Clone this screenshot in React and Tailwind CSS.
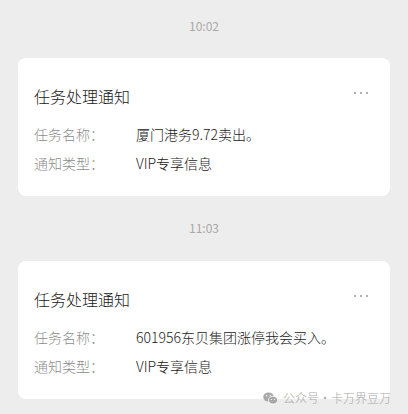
import React from 'react';

const font = { fontFamily: '"Noto Sans CJK SC", "Noto Sans", sans-serif' };

function Card({ name, type }) {
  return (
    <div className="mx-[18px] rounded-lg bg-white pl-4 pr-[22px] pt-[27px] pb-[23px]">
      <div className="flex items-center justify-between h-[22px]">
        <span className="text-[16px] leading-[22px] font-light text-[#191919]">任务处理通知</span>
        <span className="flex gap-[4px] -mt-[6px]">
          <i className="block w-[2px] h-[2px] bg-[#b0b0b0]" />
          <i className="block w-[2px] h-[2px] bg-[#b0b0b0]" />
          <i className="block w-[2px] h-[2px] bg-[#b0b0b0]" />
        </span>
      </div>
      <div className="mt-[17px] flex flex-col gap-[9px] text-[14px] leading-[20px] font-light">
        <div className="flex">
          <span className="w-[102px] text-[#8c8c8c]">任务名称：</span>
          <span className="text-[#1a1a1a]">{name}</span>
        </div>
        <div className="flex">
          <span className="w-[102px] text-[#8c8c8c]">通知类型：</span>
          <span className="text-[#1a1a1a]">{type}</span>
        </div>
      </div>
    </div>
  );
}

function Time({ t, className }) {
  return (
    <div className={`text-center text-[12px] leading-4 text-[#a9a9a9] ${className}`}>{t}</div>
  );
}

export default function App() {
  return (
    <div className="relative w-[408px] h-[414px] overflow-hidden bg-[#ededed]" style={font}>
      <Time t="10:02" className="pt-[18px] pb-6" />
      <Card name="厦门港务9.72卖出。" type="VIP专享信息" />
      <Time t="11:03" className="pt-6 pb-[25px]" />
      <Card name="601956东贝集团涨停我会买入。" type="VIP专享信息" />
      <div className="absolute left-[263px] top-[390px] flex items-center gap-[5px] text-[12px] leading-4 font-light text-[#a8a8a8]">
        <svg width="15" height="13" viewBox="0 0 15 13">
          <ellipse cx="5.5" cy="5" rx="5.3" ry="4.5" fill="#a8a8a8" />
          <ellipse cx="10" cy="8.2" rx="4.6" ry="3.9" fill="#a8a8a8" stroke="#fff" strokeWidth="0.8" />
          <circle cx="3.7" cy="3.8" r="0.7" fill="#fff" />
          <circle cx="7.2" cy="3.8" r="0.7" fill="#fff" />
          <circle cx="8.6" cy="7.5" r="0.6" fill="#fff" />
          <circle cx="11.4" cy="7.5" r="0.6" fill="#fff" />
        </svg>
        <span>公众号·卡万界豆万</span>
      </div>
    </div>
  );
}
